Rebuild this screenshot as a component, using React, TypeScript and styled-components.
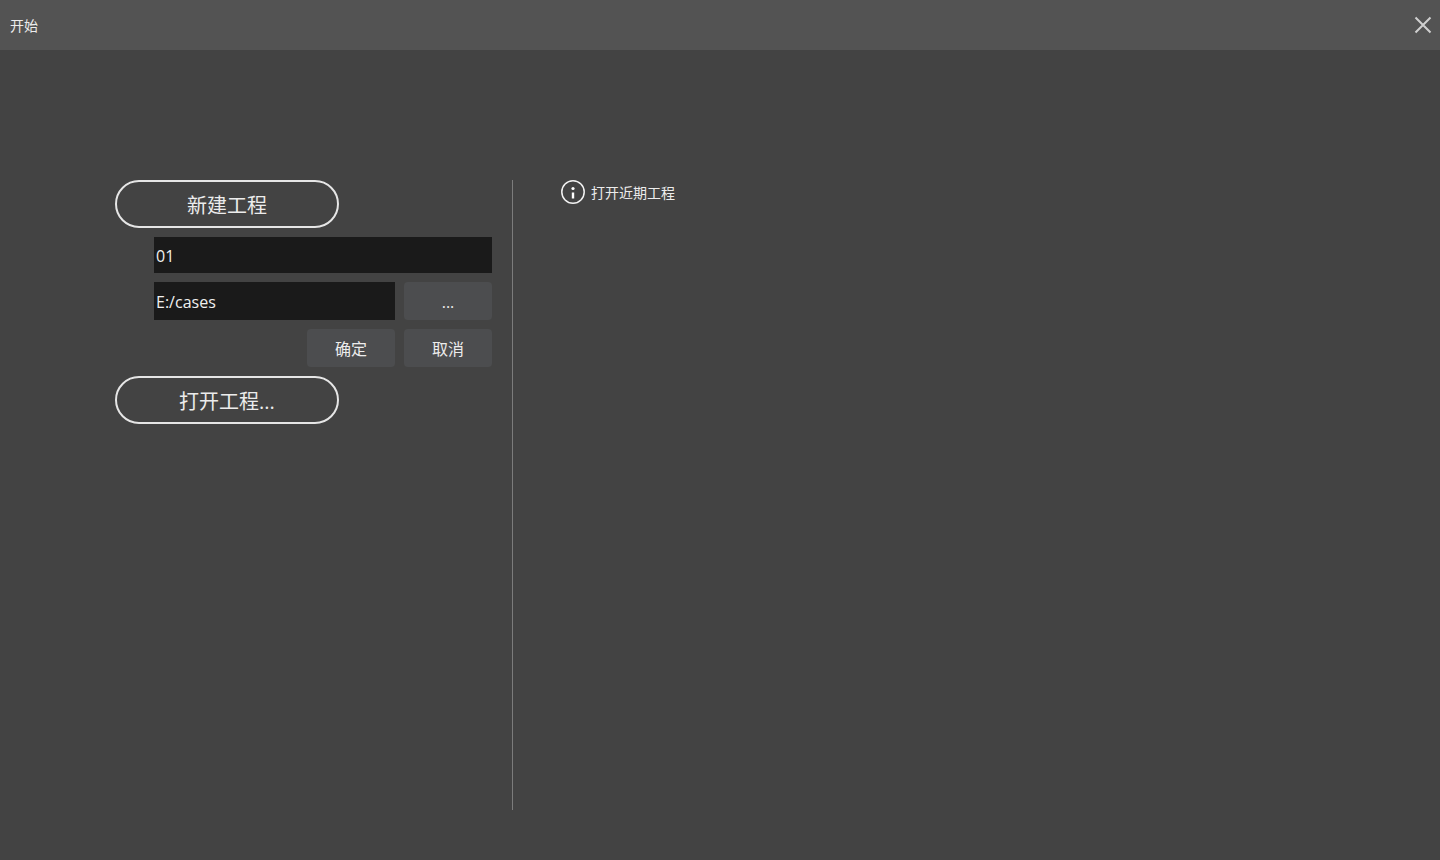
import React from "react";
import styled, { createGlobalStyle } from "styled-components";

const Global = createGlobalStyle`
  html, body { margin: 0; padding: 0; height: 100%; background: #434343; }
  body { font-family: "Open Sans", "Noto Sans CJK SC", sans-serif; color: #f2f2f2; }
  * { box-sizing: border-box; }
`;

const Page = styled.div`
  width: 1440px;
  height: 860px;
  display: flex;
  flex-direction: column;
  background: #434343;
  overflow: hidden;
`;

const TitleBar = styled.header`
  height: 50px;
  flex: none;
  display: flex;
  align-items: center;
  justify-content: space-between;
  padding: 0 7px 0 10px;
  background: #535353;
`;

const TitleText = styled.span`
  font-size: 14px;
  line-height: 20px;
  padding-top: 1px;
  color: #ececec;
`;

const CloseButton = styled.button`
  width: 20px;
  height: 20px;
  padding: 0;
  border: 0;
  background: transparent;
  display: flex;
  align-items: center;
  justify-content: center;
`;

const Content = styled.main`
  flex: 1;
  display: flex;
  padding: 130px 0 50px 115px;
`;

const LeftColumn = styled.section`
  width: 377px;
  display: flex;
  flex-direction: column;
  gap: 9px;
`;

const PillButton = styled.button`
  width: 224px;
  height: 48px;
  padding: 4px 0 0;
  border: 2px solid #e6e6e6;
  border-radius: 24px;
  background: transparent;
  color: #ececec;
  font-family: inherit;
  font-size: 20px;
  line-height: 40px;
`;

const Form = styled.div`
  margin-left: 39px;
  display: grid;
  grid-template-columns: 241px 88px;
  grid-auto-rows: auto;
  column-gap: 9px;
  row-gap: 9px;
`;

const Field = styled.div<{ $wide?: boolean; $h: number }>`
  grid-column: ${(p) => (p.$wide ? "1 / span 2" : "auto")};
  height: ${(p) => p.$h}px;
  display: flex;
  align-items: center;
  padding: 2px 0 0 2px;
  background: #1a1a1a;
  font-size: 16px;
  color: #f0f0f0;
`;

const Actions = styled.div`
  grid-column: 1 / span 2;
  display: flex;
  justify-content: flex-end;
  gap: 9px;
`;

const SoftButton = styled.button`
  width: 88px;
  height: 38px;
  padding: 2px 0 0;
  border: 0;
  border-radius: 4px;
  background: #4c4d4f;
  color: #ececec;
  font-family: inherit;
  font-size: 16px;
  line-height: 36px;
`;

const Divider = styled.div`
  width: 1px;
  margin-left: 20px;
  background: #7c7c7c;
`;

const RightColumn = styled.section`
  flex: 1;
  padding-left: 48px;
`;

const RecentRow = styled.div`
  display: flex;
  align-items: center;
  gap: 6px;
  height: 24px;
`;

const RecentText = styled.span`
  font-size: 14px;
  line-height: 24px;
  padding-top: 1px;
  color: #ececec;
`;

export default function App() {
  return (
    <Page>
      <Global />
      <TitleBar>
        <TitleText>开始</TitleText>
        <CloseButton aria-label="关闭">
          <svg width="18" height="18" viewBox="0 0 18 18" fill="none">
            <path d="M1.5 1.5 16.5 16.5M16.5 1.5 1.5 16.5" stroke="#cfcfcf" strokeWidth="2" />
          </svg>
        </CloseButton>
      </TitleBar>
      <Content>
        <LeftColumn>
          <PillButton>新建工程</PillButton>
          <Form>
            <Field $wide $h={36}>01</Field>
            <Field $h={38}>E:/cases</Field>
            <SoftButton>...</SoftButton>
            <Actions>
              <SoftButton>确定</SoftButton>
              <SoftButton>取消</SoftButton>
            </Actions>
          </Form>
          <PillButton>打开工程...</PillButton>
        </LeftColumn>
        <Divider />
        <RightColumn>
          <RecentRow>
            <svg width="24" height="24" viewBox="0 0 24 24" fill="none">
              <circle cx="12" cy="12" r="11.2" stroke="#f2f2f2" strokeWidth="1.5" />
              <circle cx="12" cy="8.5" r="1.6" fill="#ffffff" />
              <rect x="10.8" y="12.5" width="2.4" height="6" fill="#ffffff" />
            </svg>
            <RecentText>打开近期工程</RecentText>
          </RecentRow>
        </RightColumn>
      </Content>
    </Page>
  );
}
